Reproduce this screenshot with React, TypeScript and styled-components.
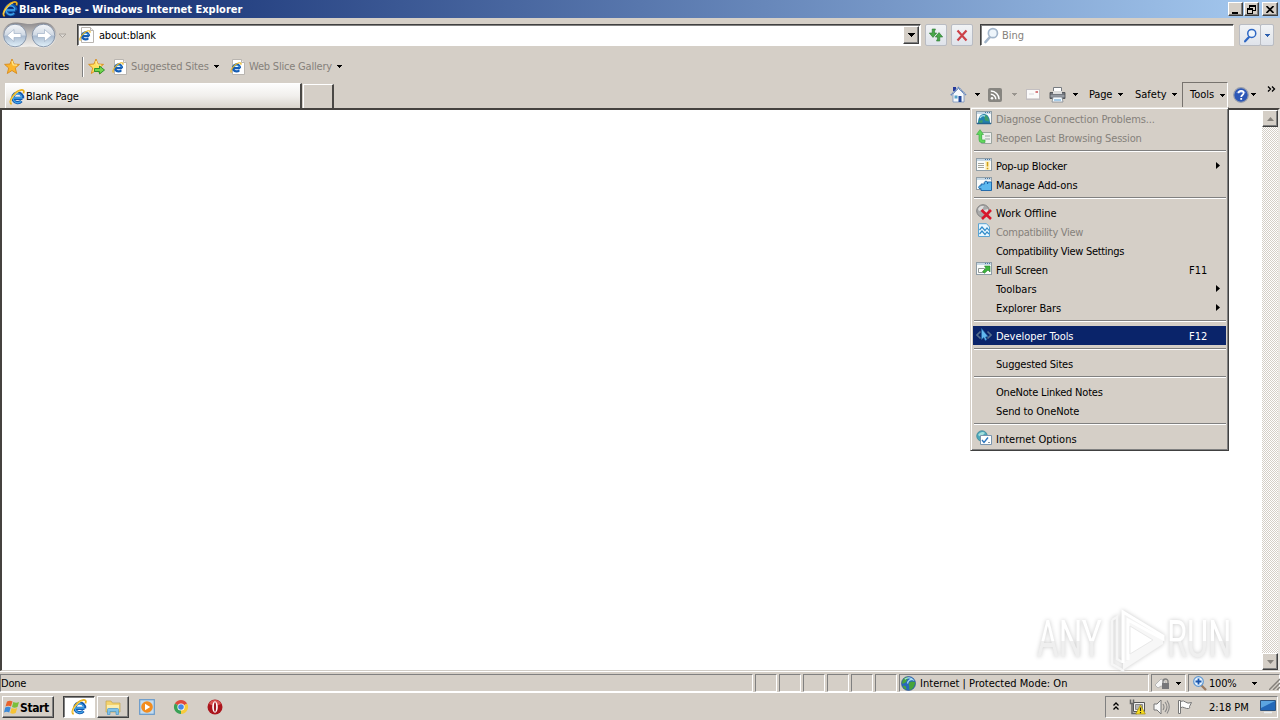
import React from "react";
import styled, { createGlobalStyle, css } from "styled-components";

const Global = createGlobalStyle`
  html, body { margin: 0; padding: 0; overflow: hidden; background: #d4d0c8; }
  * { box-sizing: border-box; }
  svg { display: block; flex: none; }
`;

const face = "#d5cfc7";

const Desktop = styled.div`
  position: relative;
  width: 1280px;
  height: 720px;
  display: flex;
  flex-direction: column;
  background: ${face};
  color: #000;
  font: 11px/14px "DejaVu Sans Condensed", "DejaVu Sans", sans-serif;
  font-stretch: condensed;
  overflow: hidden;
`;

const Label = styled.span<{ $w?: number; $ls?: number; $dim?: boolean; $bold?: boolean }>`
  display: block;
  flex: none;
  padding-top: 2px;
  white-space: pre;
  width: ${(p) => (p.$w ? `${p.$w}px` : "auto")};
  letter-spacing: ${(p) => p.$ls ?? -0.2}px;
  font-weight: ${(p) => (p.$bold ? 700 : 400)};
  color: ${(p) => (p.$dim ? "#85817b" : "inherit")};
`;

const raised = css`
  border: 1px solid;
  border-color: #fff #404040 #404040 #fff;
  box-shadow: inset -1px -1px 0 #808080;
`;

const sunken = css`
  border: 1px solid;
  border-color: #808080 #fff #fff #808080;
`;

const TitleBar = styled.header`
  display: flex;
  align-items: center;
  height: 18px;
  padding: 0 2px 0 2px;
  gap: 1px;
  color: #fff;
  background: linear-gradient(90deg, #0a246a, #a6caf0);
`;

const Spacer = styled.div`
  flex: 1;
`;

const CaptionButton = styled.div<{ $gap?: number }>`
  ${raised}
  width: ${(p) => (p.$gap ? 16 : 15)}px;
  height: 14px;
  margin-left: ${(p) => p.$gap ?? 0}px;
  background: ${face};
  display: flex;
  align-items: center;
  justify-content: center;
`;

const NavRow = styled.div`
  display: flex;
  align-items: flex-start;
  height: 34px;
  padding: 3px 5px 0 2px;
`;

const AddressBox = styled.div`
  display: flex;
  align-items: center;
  width: 844px;
  height: 22px;
  margin: 3px 0 0 8px;
  padding-left: 1px;
  background: #fff;
  border: 1px solid;
  border-color: #404040 #fff #fff #404040;
  box-shadow: inset 1px 1px 0 #808080;
`;

const DropButton = styled.div`
  ${raised}
  width: 16px;
  height: 18px;
  margin-right: 1px;
  background: ${face};
  display: flex;
  align-items: center;
  justify-content: center;
`;

const SoftButton = styled.div<{ $w: number; $ml: number }>`
  display: flex;
  align-items: center;
  justify-content: center;
  width: ${(p) => p.$w}px;
  height: 22px;
  margin: 3px 0 0 ${(p) => p.$ml}px;
  border: 1px solid #b9bcc3;
  border-radius: 2px;
  background: linear-gradient(#f1f3f5, #dfe3ea);
`;

const SearchBox = styled(AddressBox)`
  width: 254px;
  margin-left: 7px;
  padding-left: 2px;
  gap: 2px;
`;

const FavRow = styled.div`
  display: flex;
  align-items: center;
  height: 29px;
  padding: 0 0 0 4px;

  ${Label} {
    padding-top: 0;
  }
`;

const Divider = styled.div`
  width: 2px;
  height: 20px;
  margin: 0 4px 0 0;
  border-left: 1px solid #808080;
  border-right: 1px solid #fff;
`;

const TabRow = styled.div`
  display: flex;
  align-items: flex-end;
  height: 27px;
  padding-left: 5px;

  ${Label} {
    padding-top: 0;
  }
`;

const Tab = styled.div`
  display: flex;
  align-items: center;
  gap: 1px;
  width: 297px;
  height: 25px;
  padding: 2px 0 0 3px;
  background: linear-gradient(#fdfdfd, #f1efec 50%, #d9d4cd);
  border-top: 1px solid #fff;
  border-left: 1px solid #fff;
  border-right: 2px solid #4a4845;
`;

const NewTab = styled.div`
  width: 31px;
  height: 24px;
  margin-left: 1px;
  border: solid;
  border-width: 1px 2px 0 1px;
  border-color: #fff #4a4845 #fff #fff;
`;

const CommandBar = styled.div`
  display: flex;
  align-items: center;
  height: 27px;
  margin-left: 616px;
`;

const Cell = styled.div<{ $w: number; $up?: number }>`
  display: flex;
  align-items: center;
  flex: none;
  width: ${(p) => p.$w}px;
  padding-bottom: ${(p) => p.$up ?? 0}px;
`;

const ToolsButton = styled.div`
  display: flex;
  align-items: center;
  width: 46px;
  height: 26px;
  padding: 1px 0 0 7px;
  margin-right: 5px;
  border: 1px solid;
  border-color: #77736e #fff transparent #77736e;
`;

const Viewport = styled.main`
  display: flex;
  justify-content: flex-end;
  height: 563px;
  background: #fff;
  border: solid;
  border-width: 2px 2px 1px 2px;
  border-color: #45423f #e9e6e1 #d0ccc6 #45423f;
`;

const ScrollBar = styled.div`
  display: flex;
  flex-direction: column;
  justify-content: space-between;
  width: 16px;
  background: repeating-conic-gradient(#fff 0 25%, #d5cfc7 0 50%) 0 0 / 2px 2px;
`;

const ScrollButton = styled.div`
  ${raised}
  width: 16px;
  height: 17px;
  background: ${face};
  display: flex;
  align-items: center;
  justify-content: center;
`;

const StatusBar = styled.footer`
  display: flex;
  gap: 2px;
  height: 21px;
  padding-top: 2px;
  border-top: 1px solid #fff;
`;

const Panel = styled.div<{ $w: number; $pl?: number }>`
  ${sunken}
  display: flex;
  align-items: center;
  flex: none;
  width: ${(p) => p.$w}px;
  height: 18px;
  padding-left: ${(p) => p.$pl ?? 0}px;
`;

const TaskBar = styled.footer`
  display: flex;
  align-items: center;
  height: 28px;
  padding: 1px 2px 0 2px;
  border-top: 1px solid #fff;
`;

const StartButton = styled.div`
  ${raised}
  display: flex;
  align-items: center;
  width: 52px;
  height: 22px;
  padding-left: 1px;
  font-size: 12px;
`;

const TaskButton = styled.div<{ $active?: boolean; $ml: number }>`
  ${raised}
  display: flex;
  align-items: center;
  justify-content: center;
  width: 32px;
  height: 22px;
  margin-left: ${(p) => p.$ml}px;
  ${(p) =>
    p.$active &&
    css`
      background: #fff;
      border-color: #404040 #fff #fff #404040;
      box-shadow: inset 1px 1px 0 #808080;
    `}
`;

const QuickIcon = styled.div<{ $ml: number }>`
  margin-left: ${(p) => p.$ml}px;
`;

const Tray = styled.div`
  ${sunken}
  display: flex;
  align-items: center;
  width: 173px;
  height: 22px;
  padding-left: 7px;
`;

const Menu = styled.nav`
  position: absolute;
  left: 970px;
  top: 107px;
  width: 259px;
  height: 344px;
  padding: 1px 2px 2px 2px;
  background: ${face};
  border: 1px solid;
  border-color: #e6e2dc #404040 #404040 #d5cfc7;
  box-shadow: inset 1px 1px 0 #fff, inset -1px -1px 0 #808080;
`;

const MenuItem = styled.div<{ $active?: boolean }>`
  display: flex;
  align-items: center;
  height: 19px;
  padding-left: 3px;
  background: ${(p) => (p.$active ? "#0a246a" : "transparent")};
  color: ${(p) => (p.$active ? "#fff" : "#000")};
`;

const IconSlot = styled.div`
  width: 20px;
  height: 17px;
  flex: none;
`;

const Shortcut = styled.div`
  flex: none;
  width: 27px;
`;

const ArrowSlot = styled.div`
  flex: none;
  width: 10px;
`;

const Separator = styled.div`
  height: 2px;
  margin: 3px 0 4px 1px;
  border-top: 1px solid #808080;
  border-bottom: 1px solid #fff;
`;

const Watermark = styled.div`
  position: absolute;
  left: 1037px;
  top: 606px;
  width: 240px;
  height: 68px;
  display: flex;
  align-items: center;
  filter: drop-shadow(0 0 2px #c9c9c9);
`;

const WatermarkWord = styled.span<{ $w: number; $s: number }>`
  display: block;
  flex: none;
  width: 110px;
  margin-right: ${(p) => p.$w - 110}px;
  font: 400 51px/64px Roboto, sans-serif;
  transform: scaleX(${(p) => p.$s});
  transform-origin: 0 50%;
  white-space: nowrap;
  background: linear-gradient(#fff 52%, #efefef 52%);
  -webkit-background-clip: text;
  background-clip: text;
  color: transparent;
`;

const Down = ({ c = "#000", s = 5 }: { c?: string; s?: number }) => (
  <svg width={s} height={(s + 1) / 2} viewBox={`0 0 ${s} ${(s + 1) / 2}`} shapeRendering="crispEdges">
    {Array.from({ length: (s + 1) / 2 }, (_, i) => (
      <rect key={i} x={i} y={i} width={s - 2 * i} height="1" fill={c} />
    ))}
  </svg>
);

const IeLogo = ({ size = 16 }: { size?: number }) => (
  <svg width={size} height={size} viewBox="0 0 16 16">
    <path d="M13.600 9.300A4.900 4.900 0 1 0 12.400 12M4.500 9.300h9" fill="none" stroke="#1459ae" strokeWidth="3.200" />
    <path d="M13 8.300A4.500 4.500 0 1 0 12 12.200M5 9h8" fill="none" stroke="#42a5ea" strokeWidth="1.300" />
    <path d="M2.600 15.200C-1.200 13.600 4.500 3.500 11 1.300c3-1 4.600.2 3.400 3" fill="none" stroke="#e9b01c" strokeWidth="1.800" />
    <path d="M1.700 13.500C1.600 10.500 6 4 11 2" fill="none" stroke="#ffe98a" strokeWidth=".7" />
  </svg>
);

const IePage = () => (
  <svg width="16" height="16" viewBox="0 0 16 16">
    <path d="M2.500.5h9l3 3v12h-12z" fill="#fff" stroke="#b9b5b0" />
    <path d="M11.500.5v3h3" fill="#eee" stroke="#b9b5b0" />
    <path d="M10 9.200A3.500 3.500 0 1 0 9.200 11.200M3.500 9.200h6.500" fill="none" stroke="#155db4" strokeWidth="2.300" />
    <path d="M9.600 8.300A3.200 3.200 0 0 0 4 8" fill="none" stroke="#52abea" strokeWidth=".9" />
    <path d="M1.500 13.500C-.5 12 4 5.500 8.300 4c2.200-.7 3.200.1 2.500 1.800" fill="none" stroke="#e8b523" strokeWidth="1.200" />
  </svg>
);

const NavButtons = () => (
  <svg width="56" height="30" viewBox="0 0 56 30">
    <defs>
      <linearGradient id="orb" x1="0" y1="0" x2="0" y2="1">
        <stop offset="0" stopColor="#f4f6f9" />
        <stop offset=".48" stopColor="#d0d9e4" />
        <stop offset=".52" stopColor="#a9bacf" />
        <stop offset="1" stopColor="#e2f2fb" />
      </linearGradient>
      <linearGradient id="rim" x1="0" y1="0" x2="0" y2="1">
        <stop offset="0" stopColor="#8b898c" />
        <stop offset=".5" stopColor="#cac7c4" />
        <stop offset="1" stopColor="#f4f2ef" />
      </linearGradient>
    </defs>
    <path d="M13 1.500C20 1.500 22 3 27.500 3S35 1.500 42 1.500a12.500 12.500 0 0 1 0 25C36 26.500 32 25.500 27.500 25.500S19 26.500 13 26.500a12.500 12.500 0 0 1 0-25z" fill="url(#rim)" />
    {[13, 41.500].map((x) => (
      <circle key={x} cx={x} cy="14.500" r="11.300" fill="url(#orb)" stroke="#8190a5" strokeWidth=".9" />
    ))}
    <path d="M5 14.500l7-6v4h7v4h-7v4z" fill="#fff" stroke="#9fb0c6" strokeWidth=".7" />
    <path d="M49.500 14.500l-7-6v4h-7v4h7v4z" fill="#fff" stroke="#9fb0c6" strokeWidth=".7" />
  </svg>
);

const Star = ({ add }: { add?: boolean }) => (
  <svg width="18" height="17" viewBox="0 0 18 17">
    <path d="M8 1l2 5 5.500.4-4.200 3.600 1.400 5.500L8 12.500l-4.700 3 1.400-5.500L.6 6.400 6 6z" fill={add ? "#ffe060" : "#fcb52c"} stroke="#d78a1c" strokeWidth=".9" />
    <path d="M8 3l1.200 3.800L13 7.200" fill="none" stroke="#ffe88e" strokeWidth="1.300" />
    {add && <path d="M6.500 10.500h5V8l5 4-5 4v-2.500h-5z" fill="#72d64d" stroke="#248b26" strokeWidth=".9" />}
  </svg>
);

const Lens = ({ c = "#a3b6cb", size = 18 }: { c?: string; size?: number }) => (
  <svg width={size} height={size} viewBox="0 0 18 18">
    <path d="M7.500 10.500L2.500 16" stroke={c} strokeWidth="2.600" strokeLinecap="round" />
    <circle cx="10.500" cy="6.500" r="4.800" fill="#eef5fb" stroke={c} strokeWidth="1.800" />
  </svg>
);

const Refresh = () => (
  <svg width="16" height="14" viewBox="0 0 16 14">
    <path d="M7.500 1H4.200V5H1.300L5 9.400 8.700 5H6.500V3.200z" fill="#49a84a" stroke="#2a7631" strokeWidth=".6" />
    <path d="M8.500 13h3.300V9h2.900L11 4.600 7.300 9h2.200v1.800z" fill="#49a84a" stroke="#2a7631" strokeWidth=".6" />
  </svg>
);

const Stop = () => (
  <svg width="12" height="13" viewBox="0 0 12 13">
    <path d="M1.500 1.500l9 10M10.500 1.500l-9 10" stroke="#cc4148" strokeWidth="2.200" />
  </svg>
);

const Home = () => (
  <svg width="17" height="17" viewBox="0 0 17 17">
    <path d="M3 1h3v4H3z" fill="#25389a" />
    <path d="M3 8l5.500-5.500L14 8v8H3z" fill="#f5f8fc" stroke="#7793bd" strokeWidth=".8" />
    <path d="M.8 9.200L8.500 1.500l7.700 7.700" fill="none" stroke="#6689c0" strokeWidth="1.500" strokeDasharray="1.500 .5" />
    <path d="M8.500 10h3v6h-3z" fill="#23489a" />
    <path d="M4.500 9.500h3v3h-3z" fill="#55a2c8" />
  </svg>
);

const Feed = () => (
  <svg width="14" height="14" viewBox="0 0 14 14">
    <rect width="14" height="14" rx="2" fill="#878580" />
    <circle cx="4" cy="10.300" r="1.300" fill="#fff" />
    <path d="M2.800 6.300a5 5 0 0 1 5 5M2.800 3a8.300 8.300 0 0 1 8.300 8.300" fill="none" stroke="#fff" strokeWidth="1.500" />
  </svg>
);

const Mail = () => (
  <svg width="14" height="11" viewBox="0 0 14 11">
    <rect x=".5" y=".5" width="13" height="10" fill="#fbfafa" stroke="#c3bfc1" />
    <path d="M1 9.500h12" stroke="#dcd8d8" />
    <rect x="9.500" y="2" width="2.500" height="2" fill="#d77c80" />
    <path d="M3 5h5" stroke="#d6d4d8" />
  </svg>
);

const Printer = () => (
  <svg width="17" height="16" viewBox="0 0 17 16">
    <path d="M4.500.5h8V7h-8z" fill="#fff" stroke="#777b80" />
    <path d="M1 5.500h15v6H1z" fill="#73777e" stroke="#44474c" strokeWidth=".8" />
    <path d="M4 4h9v3H4z" fill="#ddd" />
    <path d="M1.500 9h14" stroke="#b9bec5" />
    <path d="M4 10h9l1 5H3z" fill="#f5fbff" stroke="#80868d" strokeWidth=".8" />
    <path d="M5 13h7" stroke="#7bb1da" strokeWidth="1.300" />
  </svg>
);

const Help = () => (
  <svg width="16" height="16" viewBox="0 0 16 16">
    <circle cx="8" cy="8" r="7.300" fill="#2d57b6" stroke="#999fac" strokeWidth="1.200" />
    <path d="M3 6a5.500 4.500 0 0 1 10 0" fill="#6d91df" />
    <path d="M5.500 6.300c0-3.300 5.200-3 5.200-.2C10.700 8 8.200 8 8.200 10" fill="none" stroke="#fff" strokeWidth="1.700" />
    <rect x="7.300" y="11" width="1.800" height="1.800" fill="#fff" />
  </svg>
);

const Globe = ({ size = 15 }: { size?: number }) => (
  <svg width={size} height={size} viewBox="0 0 16 16">
    <circle cx="8" cy="8" r="7.500" fill="#2767bd" stroke="#214b83" strokeWidth=".6" />
    <path d="M2 4c2-3 4-3 6-3 0 2-2 2-2 4S3 8 1 8zM9 7c2-2 4-1 6-.5C15 11 12 15 9.500 15 8 13 10 11 8 9.500zM2 10l3 1 1 3.500C4 14 2 12 2 10z" fill="#48a43a" />
    <path d="M4 3.500C7 .8 11 2 12.500 4 10 3 7 5 7 8" fill="none" stroke="#a9ddf5" strokeWidth="1.400" />
  </svg>
);

const Win = ({ children }: { children?: React.ReactNode }) => (
  <svg width="16" height="16" viewBox="0 0 16 16">
    <rect x=".5" y="1.500" width="15" height="12" fill="#fafcfb" stroke="#8f9da6" />
    <path d="M1 3h14" stroke="#c8d9e5" strokeWidth="2" />
    <path d="M9 2.500h1M11 2.500h1M13 2.500h1" stroke="#4978a4" />
    {children}
  </svg>
);

const icons: Record<string, React.ReactNode> = {
  diagnose: (
    <Win>
      <path d="M2 13c0-5 2-9 6-9s6 4 6 9z" fill="#2380ad" />
      <path d="M8 4.500c4 1 5 4 5 7l-4-1zM2.500 11l4-1v3H3z" fill="#3f9d6a" />
      <path d="M4 8c1-2 3-3 5-2" fill="none" stroke="#a4dbe8" strokeWidth="1.400" />
      <path d="M1 13.500h14" stroke="#24648e" strokeWidth="1.500" />
    </Win>
  ),
  reopen: (
    <svg width="16" height="16" viewBox="0 0 16 16">
      <path d="M5.500 3.500h10v11h-10z" fill="#eef0ee" stroke="#9ba59f" />
      <path d="M9 7h5M9 10h5" stroke="#99a4a0" />
      <path d="M9 13.500H5.500q-2.500 0-2.500-3V5.500H.5L4 .7l3.500 4.800H5.700V10q0 1 1 1H9z" fill="#61d85b" stroke="#3fae46" strokeWidth=".7" />
    </svg>
  ),
  popup: (
    <Win>
      <path d="M2 6.500h6M2 8.500h6M2 10.500h6" stroke="#a5a59a" />
      <path d="M9 4h5v9H9z" fill="#fff4c7" />
      <path d="M11.500 5v4.500M11.500 10.700v1.500" stroke="#cf9f16" strokeWidth="1.600" />
    </Win>
  ),
  addons: (
    <Win>
      <path d="M5 8h3.500a1.800 1.800 0 1 1 3 0V6h4v8.500H5V12.500a1.500 1.500 0 1 1 0-2.500z" fill="#5cb8ee" stroke="#1761a6" strokeWidth=".9" />
    </Win>
  ),
  offline: (
    <svg width="16" height="16" viewBox="0 0 16 16">
      <circle cx="7" cy="7" r="6.300" fill="#a9a9a9" stroke="#818181" />
      <path d="M2 5c2-4 5-3 6-3L6 6 3 7zM8 6l4-1v4L8 11z" fill="#dcdcdc" />
      <path d="M5.500 6l9.500 9M15 6l-9 9" stroke="#d8172a" strokeWidth="2.600" />
    </svg>
  ),
  compat: (
    <svg width="16" height="16" viewBox="0 0 16 16">
      <path d="M2.500.7h8L13.500 4v9.500h-11z" fill="#e9f7ff" stroke="#5ba4d2" />
      <path d="M3.500 7L6 4l3 3.500L11 5l2 2.500M3.500 11L6 8l3 3.500 2-2.500 2 2" fill="none" stroke="#308bc9" strokeWidth="1.200" />
    </svg>
  ),
  full: (
    <Win>
      <path d="M2.500 7.500h6v4h-6z" fill="#fff" stroke="#929b98" />
      <path d="M6.500 10.500L10 7.200 8.500 5H14v6l-2-2-3.500 3.200z" fill="#3eb53c" stroke="#237d29" strokeWidth=".6" />
    </Win>
  ),
  dev: (
    <svg width="16" height="16" viewBox="0 0 16 16">
      <path d="M4.500 4.500L1 8l3.500 3.500M11.500 4.500L15 8l-3.500 3.500" fill="none" stroke="#56708f" strokeWidth="1.600" />
      <path d="M5.500 1.500v11l2.300-2 1.500 3 1.500-.8L9.500 10l2.500-.5z" fill="#63b9ee" stroke="#23639f" strokeWidth=".6" />
    </svg>
  ),
  options: (
    <svg width="16" height="16" viewBox="0 0 16 16">
      <circle cx="6" cy="6" r="5.300" fill="#4ca7bb" stroke="#3b8492" strokeWidth=".7" />
      <path d="M2 5c2-3 5-4 7-2L5 7z" fill="#a6e0dc" />
      <path d="M4.500 5.500h11v9h-11z" fill="#fff" stroke="#7995ad" />
      <path d="M6 10l2 2.500 4-5" fill="none" stroke="#2b75bd" strokeWidth="1.400" />
      <path d="M12 12.500h2" stroke="#8a9ba8" />
    </svg>
  ),
};

type Entry = { t: string; icon?: string; dim?: boolean; key?: string; sub?: boolean; active?: boolean; ls?: number } | null;

const entries: Entry[] = [
  { t: "Diagnose Connection Problems...", icon: "diagnose", dim: true, ls: -0.16 },
  { t: "Reopen Last Browsing Session", icon: "reopen", dim: true, ls: -0.16 },
  null,
  { t: "Pop-up Blocker", icon: "popup", sub: true },
  { t: "Manage Add-ons", icon: "addons", ls: -0.1 },
  null,
  { t: "Work Offline", icon: "offline", ls: 0 },
  { t: "Compatibility View", icon: "compat", dim: true, ls: -0.3 },
  { t: "Compatibility View Settings", ls: -0.3 },
  { t: "Full Screen", icon: "full", key: "F11" },
  { t: "Toolbars", sub: true, ls: 0 },
  { t: "Explorer Bars", sub: true, ls: -0.1 },
  null,
  { t: "Developer Tools", icon: "dev", key: "F12", active: true, ls: -0.05 },
  null,
  { t: "Suggested Sites" },
  null,
  { t: "OneNote Linked Notes" },
  { t: "Send to OneNote", ls: -0.1 },
  null,
  { t: "Internet Options", icon: "options", ls: 0 },
];

const ToolsMenu = () => (
  <Menu>
    {entries.map((e, i) =>
      e === null ? (
        <Separator key={i} />
      ) : (
        <MenuItem key={i} $active={e.active}>
          <IconSlot>{e.icon && icons[e.icon]}</IconSlot>
          <Label $dim={e.dim} $ls={e.ls}>{e.t}</Label>
          <Spacer />
          <Shortcut><Label $ls={0}>{e.key ?? ""}</Label></Shortcut>
          <ArrowSlot>
            {e.sub && (
              <svg width="4" height="7" viewBox="0 0 4 7"><path d="M0 0l4 3.500L0 7z" /></svg>
            )}
          </ArrowSlot>
        </MenuItem>
      )
    )}
  </Menu>
);

export default function App() {
  return (
    <Desktop>
      <Global />
      <TitleBar>
        <IeLogo />
        <Label $bold $ls={0.02}>Blank Page - Windows Internet Explorer</Label>
        <Spacer />
        <CaptionButton><svg width="9" height="9"><path d="M1 7h6v2H1z" /></svg></CaptionButton>
        <CaptionButton>
          <svg width="9" height="9" shapeRendering="crispEdges">
            <path d="M2 0h7v6H6v3H0V3h2zM3 2v1h3v2h2V2zM1 5v3h4V5z" fillRule="evenodd" />
          </svg>
        </CaptionButton>
        <CaptionButton $gap={2}><svg width="8" height="7" viewBox="0 0 8 7"><path d="M.5 0l7 7M7.500 0l-7 7" stroke="#000" strokeWidth="1.600" /></svg></CaptionButton>
      </TitleBar>

      <NavRow>
        <NavButtons />
        <Cell $w={11}><svg width="9" height="29"><path d="M1 13h7l-3.500 3.500z" fill="#dedad5" stroke="#aaa59f" /></svg></Cell>
        <AddressBox>
          <Cell $w={20}><IePage /></Cell>
          <Label>about:blank</Label>
          <Spacer />
          <DropButton><Down s={7} /></DropButton>
        </AddressBox>
        <SoftButton $w={22} $ml={4}><Refresh /></SoftButton>
        <SoftButton $w={22} $ml={4}><Stop /></SoftButton>
        <SearchBox>
          <Lens size={17} />
          <Label $dim $ls={0}>Bing</Label>
        </SearchBox>
        <SoftButton $w={22} $ml={5}><Lens c="#2d67c4" size={15} /></SoftButton>
        <SoftButton $w={14} $ml={-1}><Down c="#2c5fae" /></SoftButton>
      </NavRow>

      <FavRow>
        <Cell $w={20}><Star /></Cell>
        <Label $w={58} $ls={0.08}>Favorites</Label>
        <Divider />
        <Cell $w={24}><Star add /></Cell>
        <Cell $w={19}><IePage /></Cell>
        <Label $dim $w={83} $ls={-0.15}>Suggested Sites</Label>
        <Cell $w={16}><Down /></Cell>
        <Cell $w={19}><IePage /></Cell>
        <Label $dim $w={88}>Web Slice Gallery</Label>
        <Down />
      </FavRow>

      <TabRow>
        <Tab><IeLogo /><Label>Blank Page</Label></Tab>
        <NewTab />
        <CommandBar>
          <Cell $w={25}><Home /></Cell>
          <Cell $w={13}><Down /></Cell>
          <Cell $w={24}><Feed /></Cell>
          <Cell $w={14}><Down c="#99958f" /></Cell>
          <Cell $w={23}><Mail /></Cell>
          <Cell $w={24}><Printer /></Cell>
          <Cell $w={16}><Down /></Cell>
          <Label $w={29}>Page</Label>
          <Cell $w={17}><Down /></Cell>
          <Label $w={37} $ls={0}>Safety</Label>
          <Cell $w={10}><Down /></Cell>
          <ToolsButton><Label $w={30} $ls={0}>Tools</Label><Down /></ToolsButton>
          <Cell $w={18}><Help /></Cell>
          <Cell $w={16}><Down /></Cell>
          <Cell $w={10} $up={12}>
            <svg width="9" height="6"><path d="M1 .5l2.500 2.500L1 5.500M5 .5l2.500 2.500L5 5.500" fill="none" stroke="#000" strokeWidth="1.300" /></svg>
          </Cell>
        </CommandBar>
      </TabRow>

      <Viewport>
        <ScrollBar>
          <ScrollButton><svg width="7" height="4"><path d="M0 4l3.500-4L7 4z" fill="#85817b" /></svg></ScrollButton>
          <ScrollButton><svg width="7" height="4"><path d="M0 0l3.500 4L7 0z" fill="#85817b" /></svg></ScrollButton>
        </ScrollBar>
      </Viewport>

      <StatusBar>
        <Panel $w={753}><Label>Done</Label></Panel>
        {[0, 1, 2, 3, 4, 5].map((n) => <Panel key={n} $w={22} />)}
        <Panel $w={250} $pl={1}>
          <Cell $w={19}><Globe /></Cell>
          <Label $ls={0.02}>Internet | Protected Mode: On</Label>
        </Panel>
        <Panel $w={35} $pl={3}>
          <Cell $w={21}>
            <svg width="16" height="15" viewBox="0 0 16 15">
              <path d="M0 9l6-6 4 2v6l-4-1-3 2z" fill="#f5f5f5" stroke="#aaa" strokeWidth=".8" />
              <path d="M8 7V5.500a2.500 2.500 0 0 1 5 0V7" fill="none" stroke="#808080" strokeWidth="1.400" />
              <path d="M7 7h7v6H7z" fill="#77777a" />
            </svg>
          </Cell>
          <Down />
        </Panel>
        <Panel $w={92} $pl={4}>
          <Cell $w={16}>
            <svg width="14" height="15" viewBox="0 0 14 15">
              <path d="M8 9l5 5" stroke="#9c7b62" strokeWidth="2.300" />
              <circle cx="5.500" cy="5.500" r="4.800" fill="#e6f3fe" stroke="#5e97d2" strokeWidth="1.200" />
              <path d="M5.500 2.500v6M2.500 5.500h6" stroke="#1955ac" strokeWidth="1.800" />
            </svg>
          </Cell>
          <Label $w={43}>100%</Label>
          <Cell $w={17}><Down /></Cell>
          <svg width="11" height="14"><path d="M0 14L11 3M4 14l7-7M8 14l3-3" stroke="#85817b" strokeWidth="1.500" /></svg>
        </Panel>
      </StatusBar>

      <TaskBar>
        <StartButton>
          <svg width="16" height="16" viewBox="0 0 16 16">
            <path d="M3 2.500q3-1.500 5.500 0L7 7.500q-2.500-1.500-5.500 0z" fill="#e8632c" />
            <path d="M9.300 3q3 1.300 5.700 0l-1.500 5Q10.500 9.300 8 8z" fill="#7abf3c" />
            <path d="M1.200 8.500q3-1.500 5.500 0l-1.500 5q-2.500-1.500-5.200 0z" fill="#3c8ad8" />
            <path d="M7.600 9q3 1.300 5.600 0l-1.500 5q-3 1.300-5.500 0z" fill="#f6c335" />
          </svg>
          <Label $bold $ls={-0.4}>Start</Label>
        </StartButton>
        <TaskButton $active $ml={9}><IeLogo /></TaskButton>
        <TaskButton $ml={2}>
          <svg width="16" height="16" viewBox="0 0 16 16">
            <path d="M1 2h5l1.500 2H15v9H1z" fill="#f4d36e" stroke="#c3a34e" strokeWidth=".7" />
            <path d="M2 6h12v6H2z" fill="#fbeeb0" />
            <path d="M2.500 15.500V10.500q0-1 1-1h9q1 0 1 1v5h-2.500v-3H5v3z" fill="#7fc2ea" stroke="#4b95c5" strokeWidth=".7" />
          </svg>
        </TaskButton>
        <QuickIcon $ml={10}>
          <svg width="16" height="16" viewBox="0 0 16 16">
            <rect x=".7" y=".7" width="14.600" height="14.600" fill="#c4dcf0" stroke="#6699ca" strokeWidth="1.200" />
            <circle cx="8" cy="8" r="5.800" fill="#f28c1e" />
            <path d="M6 4.700l5.200 3.300L6 11.300z" fill="#fff" />
          </svg>
        </QuickIcon>
        <QuickIcon $ml={18}>
          <svg width="16" height="16" viewBox="0 0 16 16">
            <path d="M8 8L1.900 4.500A7 7 0 0 1 14.100 4.500z" fill="#de4a3d" />
            <path d="M8 8L14.100 4.500A7 7 0 0 1 8 15z" fill="#f7cb3c" />
            <path d="M8 8v7A7 7 0 0 1 1.900 4.500z" fill="#3aa155" />
            <circle cx="8" cy="8" r="3.600" fill="#fff" />
            <circle cx="8" cy="8" r="2.800" fill="#4588e8" />
          </svg>
        </QuickIcon>
        <QuickIcon $ml={18}>
          <svg width="16" height="16" viewBox="0 0 16 16">
            <circle cx="8" cy="8" r="7.500" fill="#ab151c" />
            <path d="M2 5a6.500 6.500 0 0 1 12 0q-6 3-12 0z" fill="#d85452" />
            <ellipse cx="8" cy="8" rx="2.800" ry="5.800" fill="#fff" />
            <ellipse cx="8" cy="8" rx="1.100" ry="4.800" fill="#a11820" />
          </svg>
        </QuickIcon>
        <Spacer />
        <Tray>
          <Cell $w={16} $up={3}>
            <svg width="6" height="8"><path d="M.5 3.500L3 1l2.500 2.500M.5 7.500L3 5l2.500 2.500" fill="none" stroke="#000" strokeWidth="1.300" /></svg>
          </Cell>
          <Cell $w={24}>
            <svg width="17" height="16" viewBox="0 0 17 16">
              <path d="M4.500 3.500h11v9h-11z" fill="#f3f3f3" stroke="#555" />
              <path d="M6.500 5.500h7v5h-7z" fill="#b6b6b6" stroke="#888" />
              <path d="M1.500.5v4h3v-4M3 4.500v10h5" fill="none" stroke="#666" strokeWidth="1.500" />
              <path d="M11.500 6l4.800 9H6.700z" fill="#f8dc1e" stroke="#a58c12" strokeWidth=".7" />
              <path d="M11.500 8.500v3.500M11.500 13v1.300" stroke="#222" strokeWidth="1.200" />
            </svg>
          </Cell>
          <Cell $w={24}>
            <svg width="17" height="16" viewBox="0 0 17 16">
              <path d="M1 5h3l4-4v14l-4-4H1z" fill="#f8f8f8" stroke="#777" />
              <path d="M10 5q2 3 0 6M12 3q4 5 0 10M14 1.500q4.500 6.500 0 13" fill="none" stroke="#888" strokeWidth="1.100" />
            </svg>
          </Cell>
          <Cell $w={32}>
            <svg width="16" height="16" viewBox="0 0 16 16">
              <path d="M3.500 2.500q3-1.500 5 .5t6 .5l-2 4q1 1.500-1 2-2 .3-4-.8t-4 0z" fill="#fcfcfc" stroke="#777" />
              <path d="M1.500 1.500h2v13h-2z" fill="#fff" stroke="#777" />
            </svg>
          </Cell>
          <Label $w={51} $ls={0}>2:18 PM</Label>
          <svg width="16" height="14" viewBox="0 0 16 14">
            <path d="M.5.5h15v10H.5z" fill="#2468b8" stroke="#31547e" />
            <path d="M1 1h14L1 8z" fill="#5ca5e0" />
            <path d="M4 12.500h8" stroke="#e9eef2" strokeWidth="1.500" />
          </svg>
        </Tray>
      </TaskBar>

      <ToolsMenu />

      <Watermark>
        <WatermarkWord $w={71} $s={0.65}>ANY</WatermarkWord>
        <svg width="59" height="68" viewBox="0 0 59 68">
          <path d="M4 14v44l12 7M4 14l5-3v42l5 3" fill="none" stroke="#f6f6f6" strokeWidth="2.500" />
          <path d="M15 57V6l40 24v8L15 64z" fill="#f7f7f7" />
          <path d="M15 57V6l40 24v3L20 14v40" fill="#f2f2f2" stroke="#fff" strokeWidth="3" />
          <path d="M22 20l23 14-23 14z" fill="#fff" stroke="#e9e9e9" />
        </svg>
        <WatermarkWord $w={68} $s={0.64}>RUN</WatermarkWord>
      </Watermark>
    </Desktop>
  );
}
